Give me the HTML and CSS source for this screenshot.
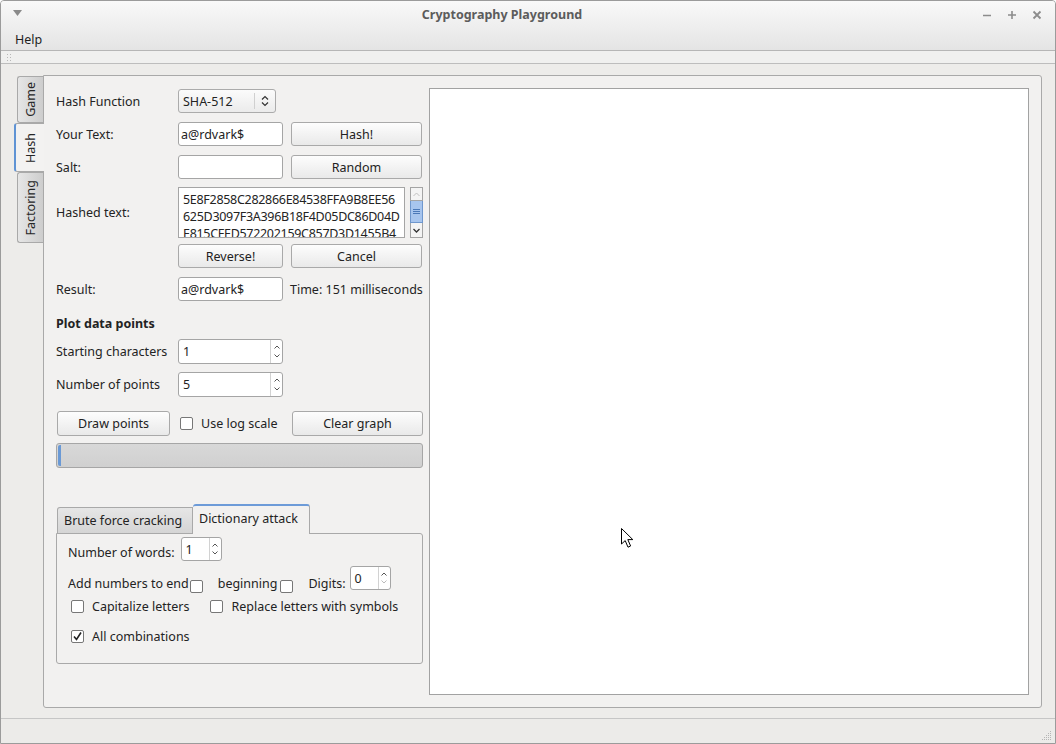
FILE: index.html
```html
<!DOCTYPE html>
<html>
<head>
<meta charset="utf-8">
<title>Cryptography Playground</title>
<link rel="stylesheet" href="styles.css">
</head>
<body>
<div class="window">
  <div class="chrome">
    <div class="titlebar">
      <svg class="wm-menu" width="10" height="7" viewBox="0 0 10 7"><path d="M0 0 H9 L4.5 6 Z" fill="#8a8a8a"/></svg>
      <div class="title">Cryptography Playground</div>
      <div class="controls">
        <svg width="10" height="10" viewBox="0 0 10 10"><path d="M1 5.5 H9" stroke="#8c8c8c" stroke-width="1.6"/></svg>
        <svg width="10" height="10" viewBox="0 0 10 10"><path d="M1 5 H9 M5 1 V9" stroke="#8c8c8c" stroke-width="1.6"/></svg>
        <svg width="10" height="10" viewBox="0 0 10 10"><path d="M1.5 1.5 L8.5 8.5 M8.5 1.5 L1.5 8.5" stroke="#8c8c8c" stroke-width="1.8"/></svg>
      </div>
    </div>
    <div class="menubar"><span class="menu-item">Help</span></div>
  </div>
  <div class="toolbar">
    <svg class="grip" width="6" height="8" viewBox="0 0 6 8"><g fill="#b8b8b8"><rect x="0" y="0" width="1" height="1"/><rect x="3" y="0" width="1" height="1"/><rect x="0" y="3" width="1" height="1"/><rect x="3" y="3" width="1" height="1"/><rect x="0" y="6" width="1" height="1"/><rect x="3" y="6" width="1" height="1"/></g></svg>
  </div>
  <div class="central">
    <div class="vtabs">
      <div class="vtab vtab-game"><span class="vtab-text">Game</span></div>
      <div class="vtab vtab-hash selected"><span class="vtab-text">Hash</span></div>
      <div class="vtab vtab-fact"><span class="vtab-text">Factoring</span></div>
    </div>
    <div class="pane">
      <div class="form">
        <div class="row r1">
          <div class="lbl">Hash Function</div>
          <div class="combo">
            <span class="combo-text">SHA-512</span>
            <span class="combo-sep"></span>
            <svg class="combo-arrow" width="8" height="12" viewBox="0 0 8 12"><path d="M1 4.5 L4 1.5 L7 4.5 M1 7.5 L4 10.5 L7 7.5" fill="none" stroke="#333" stroke-width="1.2"/></svg>
          </div>
        </div>
        <div class="row r2">
          <div class="lbl">Your Text:</div>
          <div class="input">a@rdvark$</div>
          <div class="btn btn-side">Hash!</div>
        </div>
        <div class="row r3">
          <div class="lbl">Salt:</div>
          <div class="input"></div>
          <div class="btn btn-side">Random</div>
        </div>
        <div class="row r4">
          <div class="lbl">Hashed text:</div>
          <div class="textedit">
            <div>5E8F2858C282866E84538FFA9B8EE56</div>
            <div>625D3097F3A396B18F4D05DC86D04D</div>
            <div>E815CFED572202159C857D3D1455B4</div>
          </div>
          <div class="scrollbar">
            <div class="sb-btn sb-up"><svg width="7" height="5" viewBox="0 0 7 5"><path d="M0.5 4 L3.5 1 L6.5 4" fill="none" stroke="#c0c0c0" stroke-width="1"/></svg></div>
            <div class="sb-handle"><svg width="7" height="7" viewBox="0 0 7 7"><path d="M0 1.5 H7 M0 3.5 H7 M0 5.5 H7" stroke="#4a78b8" stroke-width="1"/></svg></div>
            <div class="sb-btn sb-down"><svg width="7" height="5" viewBox="0 0 7 5"><path d="M0.5 1 L3.5 4 L6.5 1" fill="none" stroke="#333" stroke-width="1.3"/></svg></div>
          </div>
        </div>
        <div class="row r5">
          <div class="lbl"></div>
          <div class="btn btn-narrow">Reverse!</div>
          <div class="btn btn-side">Cancel</div>
        </div>
        <div class="row r6">
          <div class="lbl">Result:</div>
          <div class="input">a@rdvark$</div>
          <div class="time">Time: 151 milliseconds</div>
        </div>
        <div class="section-title">Plot data points</div>
        <div class="row r7">
          <div class="lbl">Starting characters</div>
          <div class="spin spin-wide">
            <span class="spin-val">1</span>
            <span class="spin-arrows">
              <svg width="6" height="4" viewBox="0 0 6 4"><path d="M0.5 3.5 L3 1 L5.5 3.5" fill="none" stroke="#555" stroke-width="1"/></svg>
              <svg width="6" height="4" viewBox="0 0 6 4"><path d="M0.5 0.5 L3 3 L5.5 0.5" fill="none" stroke="#555" stroke-width="1"/></svg>
            </span>
          </div>
        </div>
        <div class="row r8">
          <div class="lbl">Number of points</div>
          <div class="spin spin-wide">
            <span class="spin-val">5</span>
            <span class="spin-arrows">
              <svg width="6" height="4" viewBox="0 0 6 4"><path d="M0.5 3.5 L3 1 L5.5 3.5" fill="none" stroke="#555" stroke-width="1"/></svg>
              <svg width="6" height="4" viewBox="0 0 6 4"><path d="M0.5 0.5 L3 3 L5.5 0.5" fill="none" stroke="#555" stroke-width="1"/></svg>
            </span>
          </div>
        </div>
        <div class="row r9">
          <div class="btn btn-draw">Draw points</div>
          <span class="cb cb-log"></span>
          <span class="cb-label">Use log scale</span>
          <div class="btn btn-clear">Clear graph</div>
        </div>
        <div class="progress"><span class="progress-chunk"></span></div>

        <div class="subtabs">
          <div class="subtab-bar">
            <div class="subtab">Brute force cracking</div>
            <div class="subtab selected">Dictionary attack</div>
          </div>
          <div class="subpane">
            <div class="srow sa">
              <span class="slbl words-lbl">Number of words:</span>
              <div class="spin spin-small">
                <span class="spin-val">1</span>
                <span class="spin-arrows">
                  <svg width="6" height="4" viewBox="0 0 6 4"><path d="M0.5 3.5 L3 1 L5.5 3.5" fill="none" stroke="#555" stroke-width="1"/></svg>
                  <svg width="6" height="4" viewBox="0 0 6 4"><path d="M0.5 0.5 L3 3 L5.5 0.5" fill="none" stroke="#555" stroke-width="1"/></svg>
                </span>
              </div>
            </div>
            <div class="srow sb">
              <span class="slbl">Add numbers to end</span>
              <span class="cb cb-end"></span>
              <span class="slbl beg-lbl">beginning</span>
              <span class="cb cb-beg"></span>
              <span class="slbl digits-lbl">Digits:</span>
              <div class="spin spin-small spin-digits">
                <span class="spin-val">0</span>
                <span class="spin-arrows">
                  <svg width="6" height="4" viewBox="0 0 6 4"><path d="M0.5 3.5 L3 1 L5.5 3.5" fill="none" stroke="#555" stroke-width="1"/></svg>
                  <svg width="6" height="4" viewBox="0 0 6 4"><path d="M0.5 0.5 L3 3 L5.5 0.5" fill="none" stroke="#bbb" stroke-width="1"/></svg>
                </span>
              </div>
            </div>
            <div class="srow sc">
              <span class="cb cb-opt"></span>
              <span class="cb-label">Capitalize letters</span>
              <span class="cb cb-opt cb-replace"></span>
              <span class="cb-label">Replace letters with symbols</span>
            </div>
            <div class="srow sd">
              <span class="cb cb-opt checked"><svg width="11" height="11" viewBox="0 0 11 11"><path d="M2 5.5 L4.5 8.5 L9 1.5" fill="none" stroke="#222" stroke-width="1.6"/></svg></span>
              <span class="cb-label">All combinations</span>
            </div>
          </div>
        </div>
      </div>
      <div class="graph"></div>
    </div>
  </div>
  <div class="statusbar">
    <svg class="sizegrip" width="10" height="10" viewBox="0 0 10 10"><g fill="#b5b5b5"><rect x="8" y="0" width="1" height="1"/><rect x="6" y="2" width="1" height="1"/><rect x="8" y="2" width="1" height="1"/><rect x="4" y="4" width="1" height="1"/><rect x="6" y="4" width="1" height="1"/><rect x="8" y="4" width="1" height="1"/><rect x="2" y="6" width="1" height="1"/><rect x="4" y="6" width="1" height="1"/><rect x="6" y="6" width="1" height="1"/><rect x="8" y="6" width="1" height="1"/><rect x="0" y="8" width="1" height="1"/><rect x="2" y="8" width="1" height="1"/><rect x="4" y="8" width="1" height="1"/><rect x="6" y="8" width="1" height="1"/><rect x="8" y="8" width="1" height="1"/></g></svg>
  </div>
  <svg class="cursor" width="14" height="21" viewBox="0 0 14 21"><path d="M0.5 0.5 L0.5 16 L4.2 12.6 L7 19.2 L9.6 18 L6.8 11.6 L11.8 11.6 Z" fill="#fff" stroke="#000" stroke-width="1" stroke-linejoin="round"/></svg>
</div>
</body>
</html>
```
FILE: styles.css
```css
* { box-sizing: border-box; }
html, body { margin: 0; padding: 0; background: #ffffff; }
body {
  font-family: "Noto Sans", "Open Sans", sans-serif;
  font-size: 12.5px;
  color: #232323;
}
.window {
  position: relative;
  width: 1056px;
  height: 744px;
  border: 1px solid #9b9b9b;
  border-radius: 4px 4px 0 0;
  background: #edecea;
  display: flex;
  flex-direction: column;
  overflow: hidden;
}
.chrome {
  background: linear-gradient(#f9f9f9, #e4e4e4);
  border-bottom: 1px solid #b6b6b6;
}
.titlebar {
  height: 27px;
  display: flex;
  align-items: center;
  position: relative;
}
.wm-menu { position: absolute; left: 12px; top: 9px; }
.title {
  flex: 1;
  text-align: center;
  font-weight: bold;
  color: #5c5c5c;
  font-size: 12.5px;
  padding-right: 52px;
}
.controls {
  position: absolute;
  right: 13px;
  top: 9px;
  display: flex;
  gap: 15px;
}
.menubar {
  height: 22px;
  display: flex;
  align-items: center;
  padding-left: 14px;
}
.menu-item { color: #1e1e1e; }
.toolbar {
  height: 13px;
  background: #f0f0ef;
  border-bottom: 1px solid #bdbdbd;
  position: relative;
}
.grip { position: absolute; left: 6px; top: 3px; }
.central {
  height: 654px;
  padding: 11px 13px 10px 16px;
  display: flex;
}
.vtabs {
  width: 26px;
  flex: none;
  display: flex;
  flex-direction: column;
  position: relative;
  z-index: 2;
}
.vtab {
  width: 26px;
  border: 1px solid #a9a9a9;
  border-right: none;
  border-radius: 3px 0 0 3px;
  background: linear-gradient(to right, #e6e6e6, #cdcdcd);
  display: flex;
  align-items: center;
  justify-content: center;
}
.vtab-text {
  writing-mode: vertical-rl;
  transform: rotate(180deg);
  white-space: nowrap;
  color: #262626;
}
.vtab-game { height: 47px; margin-top: 1px; }
.vtab-hash { height: 49px; }
.vtab-fact { height: 71px; }
.vtab.selected {
  width: 30px;
  margin-left: -3px;
  margin-right: -1px;
  background: #f3f2f1;
  border-left: 2px solid #5f93d4;
  border-color: #a9a9a9;
  border-left-color: #5f93d4;
}
.pane {
  flex: 1;
  border: 1px solid #a9a9a9;
  border-radius: 0 3px 3px 3px;
  background: #f2f1f0;
  padding: 12px;
  display: flex;
  gap: 6px;
}
.form {
  width: 367px;
  flex: none;
  display: flex;
  flex-direction: column;
}
.graph {
  flex: 1;
  background: #ffffff;
  border: 1px solid #a2a2a2;
}
.row {
  display: flex;
  align-items: center;
  height: 24px;
  flex: none;
}
.r1 { margin-top: 1px; }
.r2 { margin-top: 9px; }
.r3 { margin-top: 9px; }
.r4 { margin-top: 8px; height: 51px; }
.r5 { margin-top: 6px; }
.r6 { margin-top: 9px; }
.r7 { margin-top: 6px; height: 25px; }
.r8 { margin-top: 8px; height: 25px; }
.r9 { margin-top: 14px; height: 25px; }
.lbl { width: 122px; flex: none; white-space: nowrap; }
.combo {
  width: 98px;
  height: 24px;
  border: 1px solid #ababab;
  border-radius: 3px;
  background: linear-gradient(#fbfbfb, #ebebeb);
  display: flex;
  align-items: center;
  position: relative;
}
.combo-text { padding-left: 4px; flex: 1; }
.combo-sep {
  width: 1px;
  height: 16px;
  background: #d0d0d0;
  margin-right: 6px;
}
.combo-arrow { margin-right: 6px; }
.input {
  width: 105px;
  height: 24px;
  border: 1px solid #a5a5a5;
  border-radius: 3px;
  background: #ffffff;
  padding-left: 2px;
  display: flex;
  align-items: center;
  flex: none;
}
.btn {
  height: 24px;
  border: 1px solid #a9a9a9;
  border-radius: 3px;
  background: linear-gradient(#fdfdfd, #e9e9e9);
  display: flex;
  align-items: center;
  justify-content: center;
  flex: none;
  color: #222;
}
.r9 .btn { height: 25px; }
.btn-side { width: 131px; margin-left: 8px; }
.btn-narrow { width: 105px; }
.textedit {
  width: 227px;
  height: 51px;
  border: 1px solid #a5a5a5;
  background: #ffffff;
  padding: 3px 0 0 4px;
  line-height: 17px;
  letter-spacing: -0.3px;
  overflow: hidden;
  white-space: nowrap;
  flex: none;
  align-self: flex-start;
}
.scrollbar {
  width: 13px;
  height: 51px;
  margin-left: 5px;
  display: flex;
  flex-direction: column;
  align-self: flex-start;
}
.sb-btn {
  border: 1px solid #a4a4a4;
  background: #f4f4f4;
  display: flex;
  align-items: center;
  justify-content: center;
}
.sb-up { height: 14px; }
.sb-down { height: 15px; border-top: none; }
.sb-handle {
  height: 22px;
  background: #a7c5ee;
  border: 1px solid #6f97cd;
  border-top: none;
  border-bottom: 1px solid #6f97cd;
  display: flex;
  align-items: center;
  justify-content: center;
}
.time { margin-left: 7px; white-space: nowrap; }
.section-title {
  font-weight: bold;
  margin-top: 14px;
  line-height: 18px;
  height: 18px;
}
.spin {
  height: 25px;
  border: 1px solid #a5a5a5;
  border-radius: 3px;
  background: #ffffff;
  display: flex;
  align-items: stretch;
  flex: none;
}
.spin-wide { width: 105px; }
.spin-val { flex: 1; padding-left: 4px; display: flex; align-items: center; }
.spin-arrows {
  width: 12px;
  border-left: 1px solid #d2d2d2;
  display: flex;
  flex-direction: column;
  align-items: center;
  justify-content: space-around;
  padding: 3px 0;
}
.spin-small { width: 41px; }
.btn-draw { width: 113px; margin-left: 1px; }
.cb {
  width: 13px;
  height: 13px;
  border: 1px solid #777;
  border-radius: 2px;
  background: #ffffff;
  flex: none;
  display: inline-flex;
  align-items: center;
  justify-content: center;
}
.cb-log { margin-left: 10px; }
.cb-label { margin-left: 8px; white-space: nowrap; }
.btn-clear { width: 131px; margin-left: auto; }
.progress {
  margin-top: 7px;
  height: 25px;
  border: 1px solid #a6a6a6;
  border-radius: 3px;
  background: linear-gradient(#d8d8d8, #d0d0d0);
  position: relative;
  flex: none;
}
.progress-chunk {
  position: absolute;
  left: 1px;
  top: 1px;
  bottom: 1px;
  width: 3px;
  background: #6a99d5;
  border-radius: 2px 0 0 2px;
}
.subtabs {
  margin-top: 36px;
  display: flex;
  flex-direction: column;
}
.subtab-bar {
  height: 29px;
  display: flex;
  align-items: flex-end;
  padding-left: 1px;
  position: relative;
  z-index: 2;
}
.subtab {
  height: 26px;
  padding: 0 6px 0 6px;
  width: 136px;
  border: 1px solid #a9a9a9;
  border-bottom: none;
  border-radius: 3px 0 0 0;
  background: linear-gradient(#e6e6e6, #d5d5d5);
  display: flex;
  align-items: center;
  white-space: nowrap;
}
.subtab.selected {
  height: 30px;
  width: 117px;
  margin-bottom: -1px;
  border-radius: 3px 3px 0 0;
  border-top: 2px solid #6d9bd8;
  border-left: none;
  background: #f2f1f0;
  padding-bottom: 3px;
}
.subpane {
  height: 131px;
  border: 1px solid #a9a9a9;
  border-radius: 0 3px 3px 3px;
  background: #f2f1f0;
  padding: 3px 0 0 11px;
  display: flex;
  flex-direction: column;
}
.srow { display: flex; align-items: center; white-space: nowrap; flex: none; }
.sa { height: 24px; }
.sa .spin, .sb .spin { height: 24px; }
.words-lbl { padding-top: 6px; margin-right: 6px; }
.sb { height: 24px; margin-top: 5px; }
.sb .slbl { padding-top: 10px; }
.cb-end { margin-left: 1px; margin-top: 16px; }
.beg-lbl { margin-left: 15px; margin-right: 3px; }
.cb-beg { margin-top: 16px; }
.digits-lbl { margin-left: 15px; margin-right: 4px; }
.sc { height: 17px; margin-top: 8px; }
.cb-opt { margin-left: 3px; }
.cb-replace { margin-left: 21px; }
.sd { height: 17px; margin-top: 13px; }
.statusbar {
  height: 25px;
  border-top: 1px solid #c6c6c6;
  background: #ecebe9;
  position: relative;
}
.sizegrip { position: absolute; right: 3px; bottom: 2px; }
.cursor { position: absolute; left: 620px; top: 527px; z-index: 10; }
```
